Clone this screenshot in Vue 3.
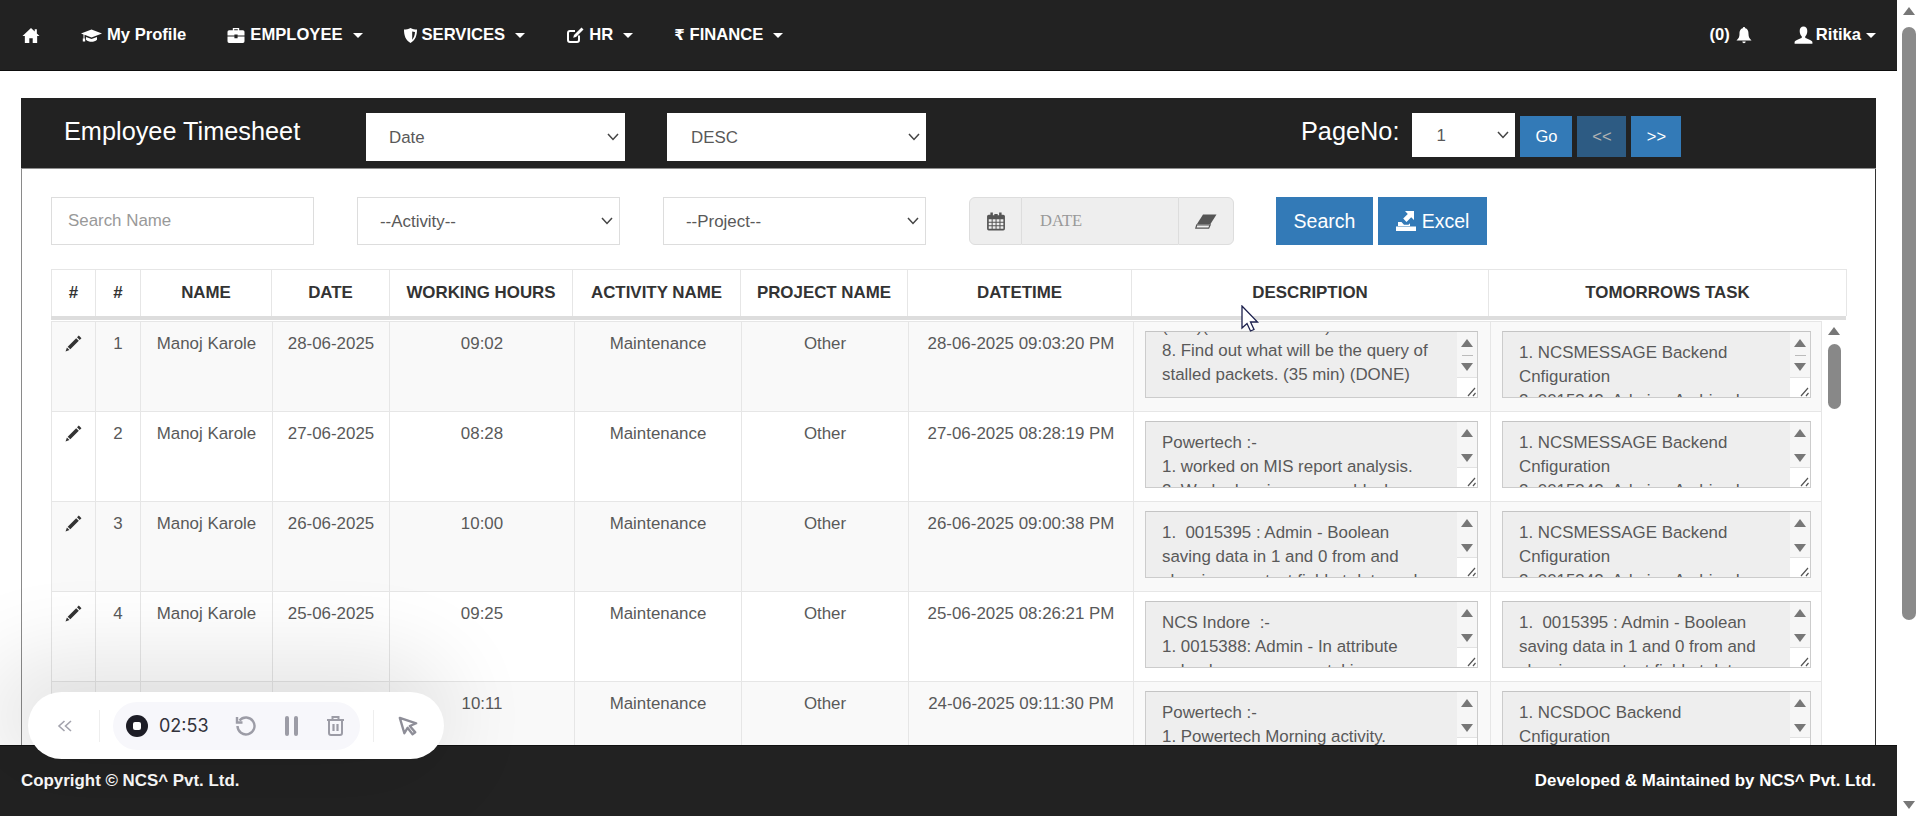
<template>
  <div class="app">
    <div class="main">
      <!-- Top navigation -->
      <nav class="navbar">
        <a class="nav-item">
          <svg class="ico" width="18" height="17" viewBox="0 0 16 16"><path d="M8 1l3.5 3.2V2.200h2v3.800L16 8.400h-2.200V15H9.600v-4.400H6.400V15H2.200V8.400H0z" /></svg>
        </a>
        <a class="nav-item">
          <svg class="ico" width="21" height="17" viewBox="0 0 21 16"><path d="M10.500 2L21 6l-10.500 4L3.500 7.300V11h.7v3H1.800v-3h.7V6.900L0 6zM5 9.500l5.500 2 5.500-2v2.800c-1.500 1.500-3.500 2-5.500 2s-4-.5-5.500-2z" /></svg>
          My Profile
        </a>
        <a class="nav-item">
          <svg class="ico" width="18" height="17" viewBox="0 0 16 16"><path fill-rule="evenodd" d="M5 3V1h6v2h3.500A1.500 1.500 0 0116 4.500V8H9.500V7h-3v1H0V4.500A1.500 1.500 0 011.500 3zm1.300 0h3.400V2.200H6.300zM0 9h6.500v1.500h3V9H16v4.500a1.500 1.500 0 01-1.500 1.500h-13A1.500 1.500 0 010 13.500z" /></svg>
          EMPLOYEE <i class="caret"></i>
        </a>
        <a class="nav-item">
          <svg class="ico" width="13" height="17" viewBox="0 0 13 16"><path fill-rule="evenodd" d="M6.500.5C8.500 1.500 11 2 13 2c0 6-1.500 10.500-6.500 13.500C1.500 12.500 0 8 0 2c2 0 4.500-.5 6.500-1.500zM8.200 4v8.300c1.800-2 2.600-4.600 2.800-7.700-1-.1-1.900-.3-2.800-.6z" /></svg>
          SERVICES <i class="caret"></i>
        </a>
        <a class="nav-item">
          <svg class="ico" width="18" height="17" viewBox="0 0 18 17"><path d="M13 8.500V13a2 2 0 01-2 2H4a2 2 0 01-2-2V6a2 2 0 012-2h5" fill="none" stroke="#fff" stroke-width="2" /><path d="M15.500.5l2 2-7.500 7.500-2.800.8.800-2.800z" /></svg>
          HR <i class="caret"></i>
        </a>
        <a class="nav-item">
          <span class="rupee">₹</span>
          FINANCE <i class="caret"></i>
        </a>
        <div class="nav-right">
          <a class="nav-item bell">
            (0)
            <svg class="ico" width="16" height="19" viewBox="0 0 16 18"><path d="M8 .5A1.200 1.200 0 019.200 1.800c2.800.6 3.300 3.200 3.300 5.700 0 3 1 4.500 3 6.500H.5c2-2 3-3.500 3-6.500 0-2.500.5-5.100 3.300-5.700A1.200 1.200 0 018 .5zM6.300 15h3.400a1.700 1.700 0 01-3.400 0z" /></svg>
          </a>
          <a class="nav-item user">
            <svg class="ico" width="19" height="19" viewBox="0 0 16 16"><path d="M8 .5c2 0 3.200 1.500 3.200 3.700 0 2-.8 3.600-1.700 4.500v1.500c2 .8 5.500 1.800 6 3.300v1.500H.5V13.500c.5-1.500 4-2.500 6-3.300V8.700C5.600 7.800 4.800 6.200 4.800 4.200 4.800 2 6 .5 8 .5z" /></svg>
            Ritika <i class="caret small"></i>
          </a>
        </div>
      </nav>

      <div class="content">
        <section class="panel">
          <header class="panel-head">
            <h2 class="title">Employee Timesheet</h2>
            <select class="head-select"><option>Date</option></select>
            <select class="head-select"><option>DESC</option></select>
            <span class="page-label">PageNo:</span>
            <select class="page-select"><option>1</option></select>
            <button class="btn go">Go</button>
            <button class="btn prev">&lt;&lt;</button>
            <button class="btn next">&gt;&gt;</button>
          </header>

          <div class="filters">
            <input class="field" type="text" placeholder="Search Name" />
            <select class="field sel"><option>--Activity--</option></select>
            <select class="field sel"><option>--Project--</option></select>
            <div class="date-group">
              <span class="addon left">
                <svg width="18" height="19" viewBox="0 0 16 17" fill="#555"><path fill-rule="evenodd" d="M3 .5h2.200V3H6.500V1.800h3V3h1.300V.5H13V2.400h1.500A1.500 1.500 0 0116 3.900V15a1.500 1.500 0 01-1.500 1.500h-13A1.500 1.500 0 010 15V3.900a1.500 1.500 0 011.500-1.500H3zM1.500 6.500v2.200h2.600V6.500zm3.500 0v2.200h2.600V6.500zm3.500 0v2.200h2.600V6.500zm3.500 0v2.200h2.600V6.500zM1.500 9.600v2.200h2.600V9.600zm3.500 0v2.200h2.600V9.600zm3.500 0v2.200h2.600V9.600zm3.500 0v2.200h2.600V9.600zM1.500 12.700v2.200h2.600v-2.200zm3.500 0v2.200h2.600v-2.200zm3.500 0v2.200h2.600v-2.200zm3.500 0v2.200h2.600v-2.200z" /></svg>
              </span>
              <input class="date-input" type="text" placeholder="DATE" readonly />
              <span class="addon right">
                <svg width="22" height="15" viewBox="0 0 22 15"><path d="M8 .5h13.500L15.500 10H2z" fill="#555" /><path d="M1.800 10.800h13.400l-1.500 3.400H.8z" fill="none" stroke="#555" stroke-width="1.200" /></svg>
              </span>
            </div>
            <button class="btn action search">Search</button>
            <button class="btn action excel">
              <svg width="20" height="20" viewBox="0 0 20 20" fill="#fff"><path d="M9 0h9v9l-2.800-2.800-4.700 4.700-3.300-3.300 4.600-4.700zM0 15.500h20V20H0zM2 11h3.500l2.500 2.800h4.500l1.500-1.500V15H2z" /></svg>
              Excel
            </button>
          </div>

          <div class="table-wrap">
            <table class="grid head-table">
              <colgroup>
                <col v-for="w in headCols" :key="w.id" :style="{ width: w.px + 'px' }" />
              </colgroup>
              <thead>
                <tr>
                  <th>#</th>
                  <th>#</th>
                  <th>NAME</th>
                  <th>DATE</th>
                  <th>WORKING HOURS</th>
                  <th>ACTIVITY NAME</th>
                  <th>PROJECT NAME</th>
                  <th>DATETIME</th>
                  <th>DESCRIPTION</th>
                  <th>TOMORROWS TASK</th>
                </tr>
              </thead>
            </table>

            <div class="body-scroll">
              <table class="grid body-table">
                <colgroup>
                  <col v-for="w in bodyCols" :key="w.id" :style="{ width: w.px + 'px' }" />
                </colgroup>
                <tbody>
                  <tr v-for="(row, i) in rows" :key="i" :class="{ odd: i % 2 === 0 }">
                    <td>
                      <svg class="pencil" width="17" height="17" viewBox="0 0 16 16" fill="#333"><path d="M13 .5l2.500 2.500-1.700 1.700-2.500-2.500zM10.500 3l2.500 2.500-8 8-2.500-2.500zM1.800 11.800l2.400 2.400-3.700 1.300z" /></svg>
                    </td>
                    <td>{{ i + 1 }}</td>
                    <td>{{ row.name }}</td>
                    <td>{{ row.date }}</td>
                    <td>{{ row.hours }}</td>
                    <td>Maintenance</td>
                    <td>Other</td>
                    <td>{{ row.stamp }}</td>
                    <td class="area-cell">
                      <div class="ta">
                        <div class="ta-text" :class="{ scrolled: row.scrolled }">
                          <div v-for="(line, k) in row.desc" :key="k">{{ line }}</div>
                        </div>
                        <div class="ta-bar">
                          <i class="tri up"></i>
                          <i v-if="row.scrolled" class="ta-thumb"></i>
                          <i class="tri down" :class="{ tight: row.scrolled }"></i>
                          <div class="resizer"><svg width="12" height="12" viewBox="0 0 12 12" stroke="#555" stroke-width="1.200"><path d="M3 11l7-8M8 11l2.500-3" /></svg></div>
                        </div>
                      </div>
                    </td>
                    <td class="area-cell">
                      <div class="ta small">
                        <div class="ta-text">
                          <div v-for="(line, k) in row.task" :key="k">{{ line }}</div>
                        </div>
                        <div class="ta-bar">
                          <i class="tri up"></i>
                          <i v-if="i === 0" class="ta-thumb"></i>
                          <i class="tri down" :class="{ tight: i === 0 }"></i>
                          <div class="resizer"><svg width="12" height="12" viewBox="0 0 12 12" stroke="#555" stroke-width="1.200"><path d="M3 11l7-8M8 11l2.500-3" /></svg></div>
                        </div>
                      </div>
                    </td>
                  </tr>
                </tbody>
              </table>
              <div class="body-bar">
                <i class="tri up dark"></i>
                <i class="body-thumb"></i>
              </div>
            </div>
          </div>
        </section>
      </div>

      <footer class="footer">
        <span>Copyright © NCS^ Pvt. Ltd.</span>
        <span>Developed &amp; Maintained by NCS^ Pvt. Ltd.</span>
      </footer>
    </div>

    <!-- Browser scrollbar -->
    <div class="page-bar">
      <i class="tri up dark"></i>
      <i class="page-thumb"></i>
      <i class="tri down dark"></i>
    </div>

    <!-- Screen recorder widget -->
    <div class="recorder">
      <svg width="16" height="14" viewBox="0 0 16 14" fill="none" stroke="#a3a3ad" stroke-width="1.600"><path d="M7.500 2L2 7l5.500 5M14 2L8.500 7l5.500 5" /></svg>
      <i class="rec-sep first"></i>
      <div class="rec-pill">
        <span class="rec-stop"><i></i></span>
        <span class="rec-time">02:53</span>
        <svg class="rec-undo" width="23" height="23" viewBox="0 0 23 23" fill="none" stroke="#9c9ca6" stroke-width="2.400"><path d="M5.500 6.500a8.500 8.500 0 11-2 5.500" /><path d="M3 3v5.500h5.500" /></svg>
        <span class="rec-pause"><i></i><i></i></span>
        <svg class="rec-trash" width="19" height="21" viewBox="0 0 19 21" fill="none" stroke="#9c9ca6" stroke-width="2"><path d="M1 5h17M6.500 5V2h6v3M3 5.500V18a2 2 0 002 2h9a2 2 0 002-2V5.500" /><path d="M7.500 9v7M11.500 9v7" stroke-width="2.200" /></svg>
      </div>
      <i class="rec-sep"></i>
      <svg width="20" height="20" viewBox="0 0 22 22" fill="none" stroke="#8e8e98" stroke-width="2.600" stroke-linejoin="round"><path d="M2 2l18 6-7 3 6 7-3 2-5.500-7-3.500 6z" /></svg>
    </div>

    <!-- Mouse pointer caught in the capture -->
    <svg class="pointer" width="20" height="28" viewBox="0 0 20 28"><path d="M1 1v22l5-4.500L9.500 26l3.500-1.500-3.500-7.500h7z" fill="#fff" stroke="#1b1f4d" stroke-width="1.300" /></svg>
  </div>
</template>

<script setup>
const toCols = (list) => list.map((px, id) => ({ id, px }));

const headCols = toCols([44, 45, 131, 118, 183, 168, 167, 224, 357, 358]);
const bodyCols = toCols([44, 45, 132, 117, 185, 167, 167, 225, 357, 331]);

const backendTask = ["1. NCSMESSAGE Backend", "Cnfiguration", "2. 0015342: Admin - Archived"];
const booleanBug = ["1.  0015395 : Admin - Boolean", "saving data in 1 and 0 from and"];

const rows = [
  {
    name: "Manoj Karole",
    date: "28-06-2025",
    hours: "09:02",
    stamp: "28-06-2025 09:03:20 PM",
    scrolled: true,
    desc: ["(1 hr)(IN PROGRESS)", "8. Find out what will be the query of", "stalled packets. (35 min) (DONE)"],
    task: backendTask,
  },
  {
    name: "Manoj Karole",
    date: "27-06-2025",
    hours: "08:28",
    stamp: "27-06-2025 08:28:19 PM",
    desc: ["Powertech :-", "1. worked on MIS report analysis.", "2. Worked on issue on unblock user"],
    task: backendTask,
  },
  {
    name: "Manoj Karole",
    date: "26-06-2025",
    hours: "10:00",
    stamp: "26-06-2025 09:00:38 PM",
    desc: [...booleanBug, "showing as a text field at data and"],
    task: backendTask,
  },
  {
    name: "Manoj Karole",
    date: "25-06-2025",
    hours: "09:25",
    stamp: "25-06-2025 08:26:21 PM",
    desc: ["NCS Indore  :-", "1. 0015388: Admin - In attribute", "upload error occur on taking"],
    task: [...booleanBug, "showing as a text field at data"],
  },
  {
    name: "Manoj Karole",
    date: "24-06-2025",
    hours: "10:11",
    stamp: "24-06-2025 09:11:30 PM",
    desc: ["Powertech :-", "1. Powertech Morning activity.", "2. Worked on issue"],
    task: ["1. NCSDOC Backend", "Cnfiguration", "2. 0015342"],
  },
];
</script>

<style>
html,
body {
  margin: 0;
  overflow: hidden;
  background: #fff;
}
</style>

<style scoped>
.app {
  position: relative;
  display: flex;
  height: 816px;
  overflow: hidden;
  font-family: "Liberation Sans", Arial, sans-serif;
  font-size: 16.900px;
  color: #595959;
}

.main {
  display: flex;
  flex-direction: column;
  width: 1897px;
  height: 100%;
}

.navbar {
  flex: none;
  display: flex;
  align-items: center;
  gap: 41px;
  height: 70px;
  padding-left: 22px;
  background: #222;
  border-bottom: 1px solid #0d0d0d;
  color: #fff;
  font-size: 16.600px;
}

.nav-item {
  display: flex;
  align-items: center;
  gap: 5px;
  font-weight: 700;
  white-space: nowrap;
}

.nav-item.bell {
  gap: 6px;
}

.nav-item.user {
  gap: 3px;
}

.ico {
  fill: #fff;
  flex: none;
}

.rupee {
  font-family: "DejaVu Sans", sans-serif;
  font-size: 15px;
}

.caret {
  width: 0;
  height: 0;
  margin-left: 5px;
  border-top: 5px solid #fff;
  border-left: 5px solid transparent;
  border-right: 5px solid transparent;
}

.caret.small {
  margin-left: 2px;
}

.nav-right {
  display: flex;
  align-items: center;
  gap: 42px;
  margin-left: auto;
  padding-right: 21px;
}

.content {
  flex: 1;
  min-height: 0;
  overflow: hidden;
  padding: 27px 21px 0;
}

.panel {
  box-sizing: border-box;
  width: 1855px;
  height: 100%;
  border-left: 1px solid #8a8a8a;
  border-right: 1px solid #333;
}

.panel-head {
  display: flex;
  align-items: flex-start;
  box-sizing: border-box;
  height: 71px;
  margin: 0 -1px;
  padding-top: 15px;
  background: #222;
  border-bottom: 1px solid #8f8f8f;
}

.title {
  width: 302px;
  margin: 2px 0 0 43px;
  font-size: 25.300px;
  font-weight: 400;
  line-height: 33px;
  color: #fff;
  white-space: nowrap;
}

/* flat selects, the chevron is drawn so it sits where the thin one does */
.head-select,
.page-select,
.sel {
  appearance: none;
  background-image: url("data:image/svg+xml,%3Csvg xmlns='http://www.w3.org/2000/svg' width='12' height='8'%3E%3Cpath d='M1 1l5 5.500L11 1' fill='none' stroke='%23444' stroke-width='1.500'/%3E%3C/svg%3E");
  background-repeat: no-repeat;
  background-position: right 6px center;
}

.head-select {
  width: 259px;
  height: 48px;
  margin-right: 42px;
  padding-left: 23px;
  border: 0;
  border-radius: 0;
  background-color: #fff;
  color: #595959;
  font: inherit;
}

.head-select + .head-select {
  padding-left: 24px;
}

.page-label {
  margin: 2px 0 0 333px;
  font-size: 25.300px;
  line-height: 33px;
  color: #fff;
}

.page-select {
  width: 103px;
  height: 44px;
  margin: 0 5px 0 13px;
  padding-left: 24px;
  border: 0;
  border-radius: 0;
  background-color: #fff;
  color: #595959;
  font: inherit;
}

.btn {
  border: 0;
  background: #337ab7;
  color: #fff;
  font-family: inherit;
  font-size: 16.500px;
  padding: 0;
}

.go,
.prev,
.next {
  height: 41px;
  margin: 3px 5px 0 0;
}

.go {
  width: 52px;
}

.prev {
  width: 49px;
  opacity: 0.65;
}

.next {
  width: 50px;
}

.filters {
  display: flex;
  align-items: stretch;
  gap: 43px;
  height: 48px;
  margin-top: 28px;
  padding-left: 29px;
}

.field {
  box-sizing: border-box;
  width: 263px;
  padding: 0 16px;
  border: 1px solid #ddd;
  border-radius: 0;
  color: #595959;
  font: inherit;
  outline: none;
}

.field::placeholder {
  color: #999;
}

.sel {
  padding-left: 22px;
  background-color: #fff;
}

.date-group {
  display: flex;
  width: 265px;
  margin-right: -1px;
}

.addon {
  display: flex;
  align-items: center;
  justify-content: center;
  box-sizing: border-box;
  background: #eee;
  border: 1px solid #ddd;
}

.addon.left {
  width: 53px;
  border-radius: 6px 0 0 6px;
}

.addon.right {
  width: 56px;
  border-radius: 0 6px 6px 0;
}

.date-input {
  box-sizing: border-box;
  width: 156px;
  padding: 0 18px;
  border: 1px solid #ddd;
  border-width: 1px 0;
  background: #eee;
  font-family: "Liberation Serif", serif;
  font-size: 16.500px;
  outline: none;
}

.date-input::placeholder {
  color: #999;
}

.action {
  font-size: 19.500px;
}

.search {
  width: 97px;
}

.excel {
  display: flex;
  align-items: center;
  justify-content: center;
  gap: 6px;
  width: 109px;
  margin-left: -38px;
}

.table-wrap {
  width: 1795px;
  margin: 24px 0 0 29px;
}

.grid {
  table-layout: fixed;
  border-collapse: collapse;
  width: 100%;
}

.head-table th {
  height: 46px;
  padding: 0;
  border: 1px solid #e6e6e6;
  border-bottom: 0;
  color: #333;
  font-weight: 700;
  text-align: center;
  white-space: nowrap;
}

.body-scroll {
  display: flex;
  overflow: hidden;
  height: 440px;
  border-top: 4px solid #ddd;
}

.body-table {
  flex: none;
  width: 1770px;
  height: 450px;
  margin-top: 1px;
}

.body-table tr {
  height: 90px;
}

.body-table tr.odd {
  background: #f9f9f9;
}

.body-table td {
  box-sizing: border-box;
  height: 90px;
  padding: 11px 4px 0;
  border: 1px solid #e6e6e6;
  vertical-align: top;
  line-height: 22px;
  text-align: center;
  white-space: nowrap;
}

.pencil {
  display: block;
  margin: 2px auto 0;
}

.body-table td.area-cell {
  padding: 9px 11px 0;
  text-align: left;
}

.ta {
  display: flex;
  box-sizing: border-box;
  width: 333px;
  height: 67px;
  overflow: hidden;
  background: #eee;
  border: 1px solid #ccc;
  border-top-color: #c4c4c4;
}

.ta.small {
  width: 309px;
}

.ta-text {
  flex: 1;
  min-width: 0;
  padding: 9px 16px;
  line-height: 24px;
  white-space: pre;
}

.ta-text.scrolled {
  margin-top: -26px;
}

.ta-bar {
  flex: none;
  display: flex;
  flex-direction: column;
  align-items: center;
  width: 20px;
  background: #f6f6f6;
}

.tri {
  display: block;
  flex: none;
  width: 0;
  height: 0;
  border-left: 6.500px solid transparent;
  border-right: 6.500px solid transparent;
}

.tri.up {
  margin-top: 7px;
  border-bottom: 8px solid #777;
}

.tri.down {
  margin-top: 17px;
  border-top: 8px solid #777;
}

.tri.down.tight {
  margin-top: 7px;
}

.ta-thumb {
  display: block;
  width: 11px;
  height: 1px;
  margin-top: 8px;
  background: #bbb;
}

.resizer {
  display: flex;
  align-items: flex-end;
  justify-content: flex-end;
  box-sizing: border-box;
  width: 20px;
  height: 20px;
  margin-top: auto;
  background: #fff;
  border-top: 1px solid #e2e2e2;
}

.body-bar {
  flex: 1;
  display: flex;
  flex-direction: column;
  align-items: center;
}

.body-thumb {
  display: block;
  width: 13px;
  height: 65px;
  margin-top: 9px;
  border-radius: 7px;
  background: #888;
}

.footer {
  flex: none;
  display: flex;
  align-items: center;
  justify-content: space-between;
  box-sizing: border-box;
  height: 71px;
  padding: 0 21px;
  background: #222;
  border-top: 1px solid #111;
  color: #fff;
  font-size: 16.900px;
  font-weight: 700;
}

.page-bar {
  flex: 1;
  display: flex;
  flex-direction: column;
  align-items: center;
  background: #fff;
}

.page-thumb {
  display: block;
  flex: none;
  width: 14px;
  height: 593px;
  margin-top: 12px;
  border-radius: 7px;
  background: #8a8a8a;
}

.page-bar .tri.down {
  margin-top: auto;
  margin-bottom: 7px;
}

.recorder {
  position: absolute;
  left: 28px;
  top: 692px;
  display: flex;
  align-items: center;
  box-sizing: border-box;
  width: 416px;
  height: 67px;
  padding-left: 29px;
  border-radius: 34px;
  background: #fff;
  box-shadow: -20px -10px 90px 24px rgba(0, 0, 0, 0.11);
}

.rec-sep {
  display: block;
  width: 1px;
  height: 32px;
  margin: 0 24px;
  background: #eee;
}

.rec-sep.first {
  margin: 0 13px 0 26px;
}

.rec-pill {
  flex: none;
  display: flex;
  align-items: center;
  box-sizing: border-box;
  width: 247px;
  height: 48px;
  margin-right: -11px;
  padding-left: 13px;
  border-radius: 24px;
  background: #f7f7fb;
}

.rec-stop {
  display: flex;
  align-items: center;
  justify-content: center;
  width: 22px;
  height: 22px;
  border-radius: 50%;
  background: #1d1d26;
}

.rec-stop i {
  display: block;
  width: 8px;
  height: 8px;
  border-radius: 2px;
  background: #fff;
}

.rec-time {
  margin-left: 11px;
  font-family: Inter, "Liberation Sans", sans-serif;
  font-size: 18px;
  color: #33333c;
}

.rec-undo {
  margin-left: 25px;
}

.rec-pause {
  display: flex;
  gap: 5px;
  margin-left: 28px;
}

.rec-pause i {
  display: block;
  width: 4px;
  height: 20px;
  border-radius: 2px;
  background: #9c9ca6;
}

.rec-trash {
  margin-left: 28px;
}

.pointer {
  position: absolute;
  left: 1241px;
  top: 305px;
}
</style>
